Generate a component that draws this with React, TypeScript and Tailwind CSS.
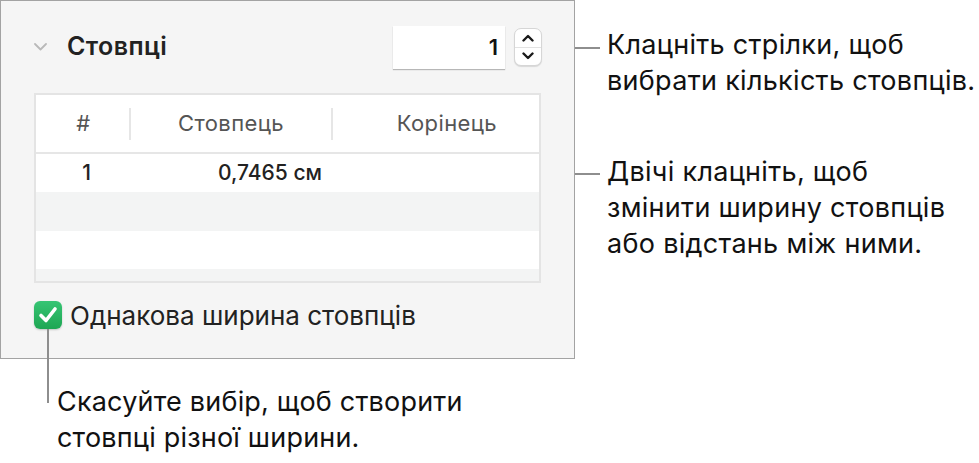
import React from 'react';

function Chevron({ up }: { up?: boolean }) {
  return (
    <svg width="12" height="8" viewBox="0 0 12 8">
      <polyline
        points={up ? '1.5,6.5 6,2 10.5,6.5' : '1.5,1.5 6,6 10.5,1.5'}
        fill="none"
        stroke="#1a1a1a"
        strokeWidth="2.4"
        strokeLinecap="round"
        strokeLinejoin="round"
      />
    </svg>
  );
}

function Stepper() {
  return (
    <div className="ml-[9px] w-[28px] h-[38px] rounded-[7px] bg-white border border-[#d6d6d6] shadow-[0_1px_1px_rgba(0,0,0,0.12)] flex flex-col">
      <div className="flex-1 flex items-center justify-center border-b border-[#e2e2e2]">
        <Chevron up />
      </div>
      <div className="flex-1 flex items-center justify-center">
        <Chevron />
      </div>
    </div>
  );
}

function Callout(props: { lines: string[]; className?: string; lineTop: string }) {
  return (
    <div className={'flex items-start ' + (props.className ?? '')}>
      <div className={'w-[59px] h-[2px] bg-[#8e8e8e] shrink-0 ' + props.lineTop} />
      <div className="ml-[7px] text-[27px] leading-[36px] tracking-[0.3px] text-[#111] whitespace-nowrap">
        {props.lines.map((l, i) => (
          <div key={i}>{l}</div>
        ))}
      </div>
    </div>
  );
}

export default function App() {
  return (
    <div className="w-[979px] h-[463px] bg-white flex overflow-hidden font-['Inter','Noto_Sans',sans-serif]">
      {/* left: inspector panel + bottom note */}
      <div className="w-[575px] shrink-0 flex flex-col">
        <div className="relative h-[359px] border border-[#a3a3a3] bg-[#f5f5f5] pl-[33px] pr-[32px]">
          <div className="mt-[24px] h-[44px] flex items-center">
            <svg width="13" height="8" viewBox="0 0 13 8" className="shrink-0">
              <polyline points="1,1 6.5,6.5 12,1" fill="none" stroke="#b9b9b9" strokeWidth="1.8" strokeLinecap="round" strokeLinejoin="round" />
            </svg>
            <span className="ml-[20px] text-[25px] tracking-[0.4px] font-semibold text-[#222]">Стовпці</span>
            <div className="flex-1" />
            <div className="w-[112px] h-[43px] bg-white shadow-[0_1px_1px_rgba(0,0,0,0.25)] flex items-center justify-end pr-[7px] text-[22px] font-semibold text-[#111]">
              1
            </div>
            <Stepper />
          </div>

          <div className="mt-[24px] w-[507px] h-[190px] border-2 border-[#e4e4e4] bg-white overflow-hidden flex flex-col">
            <div className="h-[59px] shrink-0 border-b-2 border-[#e6e6e6] flex items-center text-[22px] tracking-[0.4px] text-[#555]">
              <div className="w-[93px] text-center pl-[2px]">#</div>
              <div className="w-[2px] h-[32px] bg-[#e6e6e6]" />
              <div className="w-[200px] text-center">Стовпець</div>
              <div className="w-[2px] h-[32px] bg-[#e6e6e6]" />
              <div className="flex-1 text-right pr-[42px]">Корінець</div>
            </div>
            <div className="h-[38px] shrink-0 flex items-center text-[21px] font-medium text-[#222]">
              <div className="w-[93px] text-center pl-[8px]">1</div>
              <div className="w-[193px] text-right">0,7465 см</div>
            </div>
            <div className="h-[39px] shrink-0 bg-[#f3f4f4]" />
            <div className="h-[38px] shrink-0 bg-white" />
            <div className="flex-1 bg-[#f3f4f4]" />
          </div>

          <div className="mt-[18px] h-[28px] flex items-center">
            <div className="relative w-[28px] h-[28px] shrink-0">
              <div className="w-full h-full rounded-[6px] bg-gradient-to-b from-[#36c574] to-[#1ea653] shadow-[0_1px_2px_rgba(0,0,0,0.2)]">
                <svg width="28" height="28" viewBox="0 0 28 28">
                  <polyline points="7,14.5 12,19.5 21,8" fill="none" stroke="white" strokeWidth="3.6" strokeLinecap="round" strokeLinejoin="round" />
                </svg>
              </div>
              <div className="absolute left-[13px] top-[28px] w-[2px] h-[74px] bg-[#8e8e8e] z-10" />
            </div>
            <span className="ml-[8px] text-[26px] text-[#222]">Однакова ширина стовпців</span>
          </div>
        </div>

        <div className="mt-[25px] pl-[57px] text-[27px] leading-[36px] tracking-[0.2px] text-[#111]">
          <div>Скасуйте вибір, щоб створити</div>
          <div>стовпці різної ширини.</div>
        </div>
      </div>

      {/* right: callouts */}
      <div className="-ml-[34px] flex flex-col">
        <Callout className="mt-[27px]" lineTop="mt-[20px]" lines={['Клацніть стрілки, щоб', 'вибрати кількість стовпців.']} />
        <Callout className="mt-[55px]" lineTop="mt-[19px]" lines={['Двічі клацніть, щоб', 'змінити ширину стовпців', 'або відстань між ними.']} />
      </div>
    </div>
  );
}
